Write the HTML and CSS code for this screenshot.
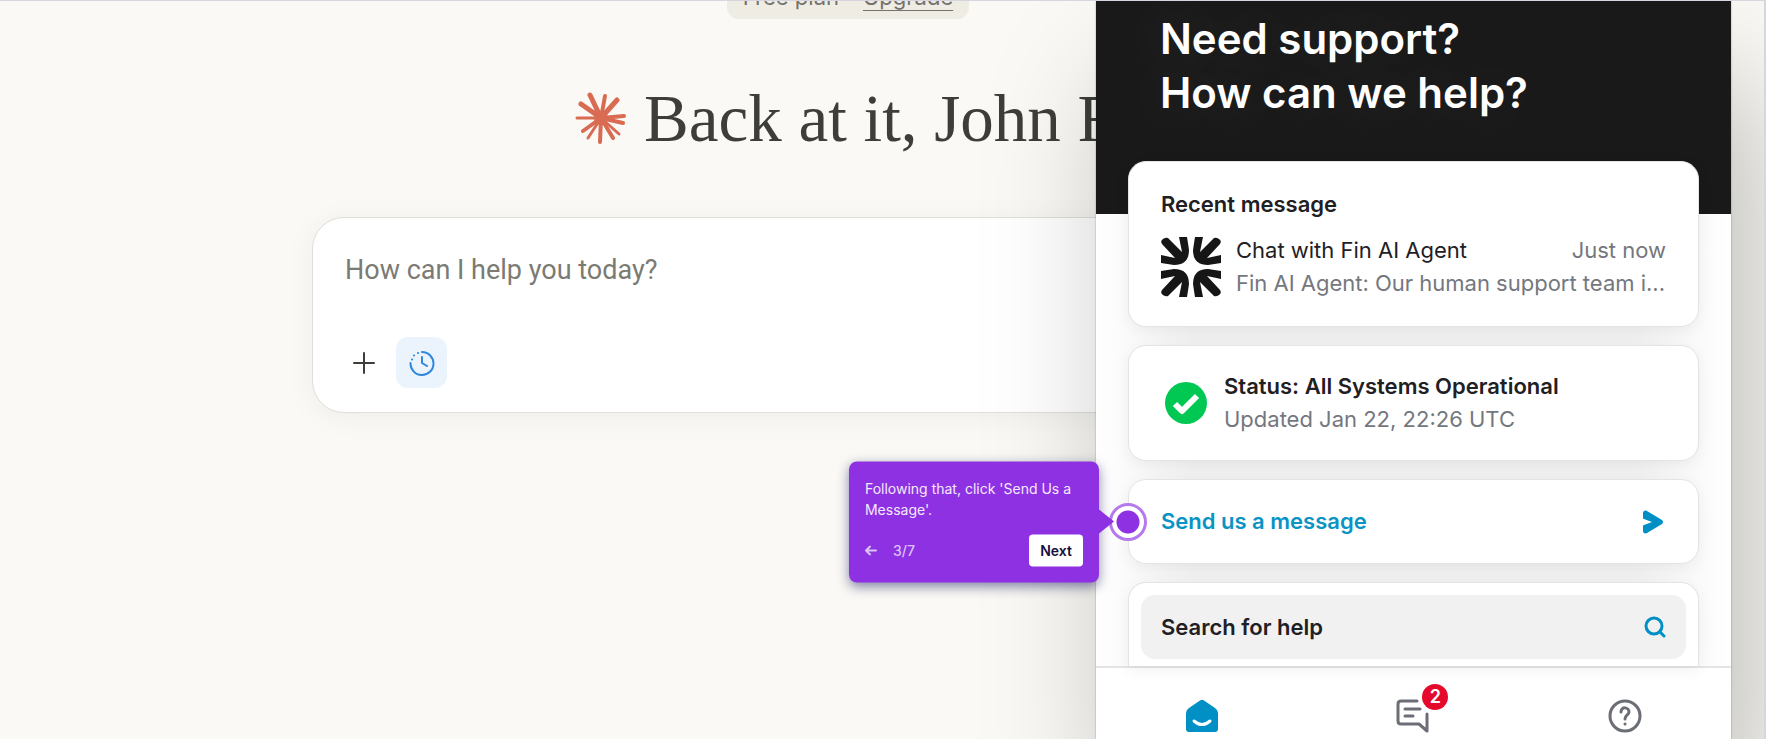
FILE: index.html
```
<!DOCTYPE html>
<html lang="en">
<head>
    <meta charset="UTF-8">
    <meta name="viewport" content="width=device-width, initial-scale=1.0">
    <title>Chat</title>
    <link rel="stylesheet" href="styles.css">
</head>
<body>
    <main class="chat">
        <div class="plan">
            <span>Free plan</span>
            <a href="#">Upgrade</a>
        </div>

        <div class="chat-inner">
            <h1 class="greeting">
                <svg width="52" height="52" viewBox="0 0 52 52" fill="none" stroke="#d96b52" stroke-linecap="round">
                    <path stroke-width="5" d="M27 26L16 3M27 26L7 12M27 26L43 8"/>
                    <path stroke-width="4" d="M27 26L31 4M27 26L50 24M27 26L49 31M27 26L9 39M27 26L39 46M27 26L26 50"/>
                    <path stroke-width="3" d="M27 26L3 26M27 26L14 46M27 26L45 42"/>
                    <circle cx="27" cy="26" r="7" fill="#d96b52" stroke="none"/>
                </svg>
                <span>Back at it, John F</span>
            </h1>

            <form class="composer">
                <textarea rows="1" placeholder="How can I help you today?" aria-label="Message"></textarea>
                <div class="composer-tools">
                    <button type="button" class="tool add" aria-label="Add">
                        <svg width="24" height="24" viewBox="0 0 24 24" fill="none" stroke="#3d3d3a" stroke-width="2" stroke-linecap="round">
                            <path d="M12 2V22M2 12H22"/>
                        </svg>
                    </button>
                    <button type="button" class="tool active" aria-label="History">
                        <svg width="26" height="26" viewBox="0 0 26 26" fill="none" stroke="#2f86dc" stroke-width="2" stroke-linecap="round" stroke-linejoin="round">
                            <path d="M13 2A11.500 11.500 0 1 1 1.500 13"/>
                            <path d="M13 7V13L18 16"/>
                            <path d="M3 9.500h.1M5 5.500h.1M9 3h.1"/>
                        </svg>
                    </button>
                </div>
            </form>
        </div>
    </main>

    <aside class="messenger">
        <header class="messenger-head">
            <h2>Need support?<br>How can we help?</h2>
        </header>

        <div class="cards">
            <section class="card recent">
                <h3>Recent message</h3>
                <div class="conversation">
                    <svg width="60" height="60" viewBox="0 0 60 60" fill="#161616">
                        <path id="arm" d="M18 0H26Q27 6 28 13Q28 28 13 28L0 26V18L14 21L1 7Q-1 4 2 2T7 1L21 15Z"/>
                        <use href="#arm" transform="matrix(-1 0 0 1 60 0)"/>
                        <use href="#arm" transform="matrix(1 0 0 -1 0 60)"/>
                        <use href="#arm" transform="matrix(-1 0 0 -1 60 60)"/>
                    </svg>
                    <div class="conversation-text">
                        <p class="row"><span>Chat with Fin AI Agent</span><time>Just now</time></p>
                        <p class="preview">Fin AI Agent: Our human support team i...</p>
                    </div>
                </div>
            </section>

            <section class="card status">
                <svg width="44" height="44" viewBox="0 0 44 44" fill="none">
                    <circle cx="22" cy="22" r="21" fill="#00c853"/>
                    <path d="M11 23L18 30L33 15" stroke="#fff" stroke-width="6" stroke-linejoin="round"/>
                </svg>
                <div>
                    <h3>Status: All Systems Operational</h3>
                    <p>Updated Jan 22, 22:26 UTC</p>
                </div>
            </section>

            <div class="send-wrap">
                <button type="button" class="card send">
                    <span>Send us a message</span>
                    <svg width="22" height="24" viewBox="0 0 22 24" fill="#0090c5">
                        <path d="M1 3C1 1 3 0 5 1L20 10Q22 12 20 14L5 23C3 24 1 23 1 21V16Q1 15 2 15L10 12L2 9Q1 9 1 8Z"/>
                    </svg>
                </button>

                <span class="beacon"></span>
                <div class="tip" role="dialog" aria-label="Tour step">
                    <p>Following that, click 'Send Us a Message'.</p>
                    <div class="tip-foot">
                        <button type="button" class="back" aria-label="Back">
                            <svg width="12" height="10" viewBox="0 0 12 10" fill="none" stroke="currentColor" stroke-width="2" stroke-linecap="round" stroke-linejoin="round">
                                <path d="M11 5H1M5 1L1 5L5 9"/>
                            </svg>
                        </button>
                        <span>3/7</span>
                        <button type="button" class="next">Next</button>
                    </div>
                </div>
            </div>

            <section class="card help">
                <button type="button" class="search">
                    <span>Search for help</span>
                    <svg width="22" height="22" viewBox="0 0 22 22" fill="none" stroke="#0090c5" stroke-width="3" stroke-linecap="round">
                        <circle cx="10" cy="10" r="8"/>
                        <path d="M16 16L20 20"/>
                    </svg>
                </button>
            </section>
        </div>

        <nav class="tabs">
            <a href="#" aria-label="Home">
                <svg width="34" height="34" viewBox="0 0 34 34">
                    <path d="M1 15Q1 11 4 9L15 1.500Q17 0 19 1.500L30 9Q33 11 33 15V30Q33 33 30 33H4Q1 33 1 30Z" fill="#0090c5"/>
                    <path d="M9 22Q17 29 25 22" fill="none" stroke="#fff" stroke-width="3" stroke-linecap="round"/>
                </svg>
            </a>
            <a href="#" aria-label="Messages">
                <svg width="34" height="34" viewBox="0 0 34 34" fill="none" stroke="#6b6e76" stroke-width="3" stroke-linecap="round" stroke-linejoin="round">
                    <path d="M21 2H5Q2 2 2 5V22Q2 25 5 25H23L31 32V15M9 10H24M9 17H17"/>
                </svg>
                <span class="badge">2</span>
            </a>
            <a href="#" aria-label="Help">
                <svg width="34" height="34" viewBox="0 0 34 34" fill="none" stroke="#6b6e76" stroke-width="3" stroke-linecap="round">
                    <circle cx="17" cy="17" r="15"/>
                    <path d="M13 13C13 7 21 8 21 13C21 16 17 16 17 20M17 25h.1"/>
                </svg>
            </a>
        </nav>
    </aside>
</body>
</html>
```
FILE: styles.css
```
* {
    box-sizing: border-box;
}
body {
    margin: 0;
    position: relative;
    height: 100vh;
    overflow: hidden;
    background: #faf9f5;
    border-top: 1px solid #d7d6e0;
    border-right: 2px solid #d7d6e0;
    font-family: Inter, "Liberation Sans", sans-serif;
}
h1, h2, h3, p {
    margin: 0;
    font-weight: normal;
}
button {
    border: none;
    padding: 0;
    font: inherit;
    color: inherit;
    background: none;
    cursor: pointer;
}
svg {
    display: block;
    flex: none;
}

/* chat page */
.chat {
    display: flex;
    flex-direction: column;
    align-items: center;
    gap: 64px;
    padding-right: 68px;
}
.plan {
    display: flex;
    align-items: flex-end;
    gap: 24px;
    height: 18px;
    padding: 0 16px 10px;
    border-radius: 0 0 12px 12px;
    background: #efece3;
    color: #73726c;
    font-size: 22px;
    line-height: 24px;
}
.plan a {
    color: inherit;
    text-underline-offset: 5px;
    text-decoration-thickness: 1px;
}
.chat-inner {
    width: 100%;
    max-width: 1072px;
}
.greeting {
    display: flex;
    align-items: center;
    gap: 18px;
    padding-left: 262px;
    color: #3d3d3a;
    font-family: "Liberation Serif", serif;
    font-size: 67px;
    line-height: 70px;
    white-space: nowrap;
}
.composer {
    margin-top: 64px;
    padding: 32px;
    padding-bottom: 24px;
    border: 1px solid #dfded9;
    border-radius: 32px;
    background: white;
    box-shadow: 0 4px 30px rgba(0, 0, 0, 0.05);
}
.composer textarea {
    display: block;
    width: 100%;
    height: 64px;
    padding: 0;
    border: none;
    outline: none;
    resize: none;
    background: none;
    font-family: Roboto, sans-serif;
    font-size: 27px;
    line-height: 40px;
}
.composer textarea::placeholder {
    color: #7b7a73;
}
.composer-tools {
    display: flex;
    gap: 13px;
    margin-top: 23px;
}
.tool {
    display: grid;
    place-items: center;
    width: 51px;
    height: 51px;
    border-radius: 12px;
}
.tool.add {
    width: 38px;
}
.tool.active {
    background: #ebf4fd;
}

/* support messenger */
.messenger {
    position: absolute;
    top: 0;
    right: 33px;
    width: 36%;
    background: linear-gradient(90deg, #fff, #f1f1f1 15%, #f1f1f1 85%, #fff);
    box-shadow: 0 0 2px rgba(0, 0, 0, 0.3), 20px 80px 120px rgba(0, 0, 0, 0.25);
}
.messenger-head {
    height: 213px;
    padding: 11px 64px;
    background: #191919;
}
.messenger-head h2 {
    color: white;
    font-size: 42px;
    font-weight: 600;
    line-height: 54px;
    text-shadow: 0 0 60px rgba(255, 255, 255, 0.2);
}
.cards {
    display: flex;
    flex-direction: column;
    gap: 18px;
    margin-top: -53px;
    padding: 0 32px;
    color: #1f2024;
    font-size: 22px;
    line-height: 33px;
}
.card {
    border: 1px solid #e4e4e4;
    border-radius: 18px;
    background: white;
    box-shadow: 0 4px 16px rgba(0, 0, 0, 0.06);
}
.card h3, .send, .search {
    font-size: 22px;
    font-weight: 600;
}
.recent {
    padding: 26px 32px;
}
.conversation {
    display: flex;
    align-items: center;
    gap: 15px;
    margin-top: 13px;
}
.conversation-text {
    flex: 1;
    min-width: 0;
}
.row {
    display: flex;
    justify-content: space-between;
}
.row time, .preview, .status p {
    color: #74777e;
}
.preview {
    overflow: hidden;
    white-space: nowrap;
    text-overflow: ellipsis;
}
.status {
    display: flex;
    align-items: center;
    gap: 16px;
    padding: 24px 35px;
}
.send-wrap {
    position: relative;
}
.send {
    display: flex;
    align-items: center;
    justify-content: space-between;
    width: 100%;
    padding: 25px 34px 25px 32px;
    color: #0a93c4;
}
.help {
    height: 84px;
    padding: 12px;
    border-bottom: none;
    border-radius: 18px 18px 0 0;
}
.search {
    display: flex;
    align-items: center;
    justify-content: space-between;
    width: 100%;
    height: 64px;
    padding: 0 20px;
    border-radius: 14px;
    background: #f1f1f1;
}
.tabs {
    display: flex;
    justify-content: space-around;
    padding: 31px 0 6px;
    border-top: 2px solid #e4e4e4;
    background: white;
}
.tabs a {
    position: relative;
    height: 34px;
}
.badge {
    position: absolute;
    top: -15px;
    right: -18px;
    width: 26px;
    height: 26px;
    border-radius: 50%;
    background: #e5092c;
    box-shadow: 0 0 0 3px white;
    color: white;
    font-size: 18px;
    font-weight: 600;
    line-height: 26px;
    text-align: center;
}

/* tour step */
.beacon {
    position: absolute;
    top: 50%;
    left: 0;
    width: 38px;
    height: 38px;
    margin: -19px;
    border: 3px solid #b57bec;
    border-radius: 50%;
    background: radial-gradient(circle, #8e31e2 11px, white 12px);
}
.tip {
    position: absolute;
    top: 50%;
    right: 100%;
    width: 250px;
    margin-right: 29px;
    padding: 16px;
    transform: translateY(-50%);
    border-radius: 8px;
    background: #8e31e2;
    box-shadow: 0 4px 12px rgba(20, 20, 90, 0.5);
    color: #f4eafd;
    font-size: 14px;
    font-weight: 500;
    line-height: 21px;
}
.tip::after {
    content: "";
    position: absolute;
    top: 50%;
    left: 100%;
    margin-top: -12px;
    border: 12px solid transparent;
    border-left: 15px solid #8e31e2;
    border-right: none;
}
.tip-foot {
    display: flex;
    align-items: center;
    gap: 16px;
    margin-top: 15px;
    color: #dcc3f6;
}
.next {
    margin-left: auto;
    padding: 0 11px;
    border-radius: 4px;
    background: white;
    color: #160f3c;
    font-weight: 600;
    line-height: 32px;
}
```
